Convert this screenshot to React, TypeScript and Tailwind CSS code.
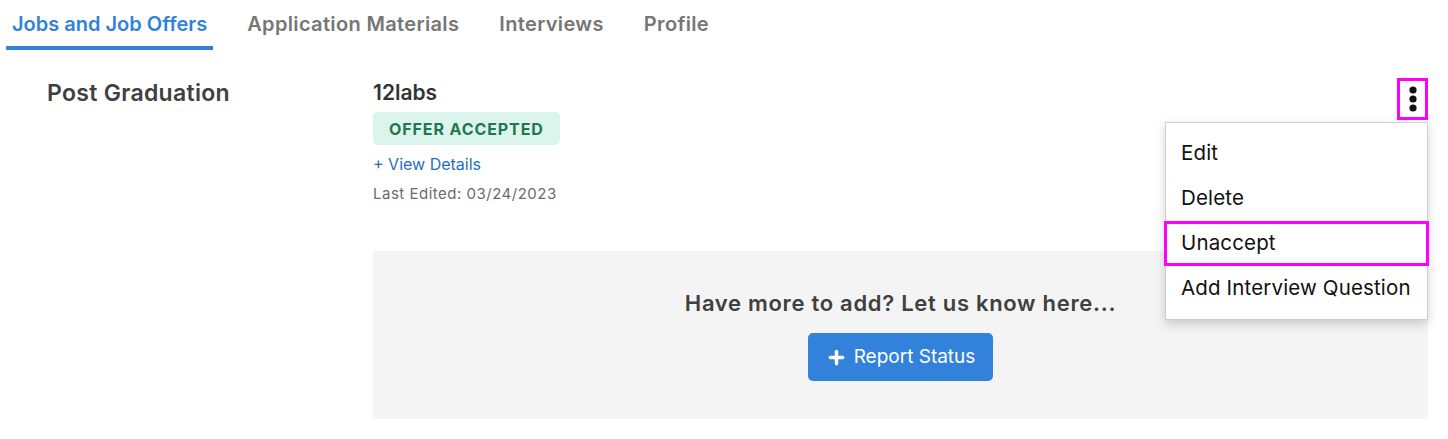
import { Plus } from "lucide-react";

const tabs = ["Jobs and Job Offers", "Application Materials", "Interviews", "Profile"];
const menuItems = ["Edit", "Delete", "Unaccept", "Add Interview Question"];

function KebabIcon() {
  return (
    <svg width="8" height="26" viewBox="0 0 8 26" fill="#111">
      <circle cx="4" cy="4" r="3.6" />
      <circle cx="4" cy="13" r="3.6" />
      <circle cx="4" cy="22" r="3.6" />
    </svg>
  );
}

function ActionMenu() {
  return (
    <div className="absolute right-0 top-[44px] w-[263px] bg-white border border-[#cfcfcf] shadow-[0_4px_10px_rgba(0,0,0,0.18)] py-[8px] z-10">
      {menuItems.map((item) => (
        <div
          key={item}
          className={
            item === "Unaccept"
              ? "h-[45px] flex items-center whitespace-nowrap text-[20.5px] tracking-[0.15px] text-[#111] border-[3px] border-[#ff00ff] -mx-[2px] px-[14px]"
              : "h-[45px] flex items-center whitespace-nowrap px-[15px] text-[20.5px] tracking-[0.15px] text-[#111]"
          }
        >
          {item}
        </div>
      ))}
    </div>
  );
}

export default function App() {
  return (
    <div className="w-[1448px] h-[439px] bg-white overflow-hidden font-['Inter','Liberation_Sans',sans-serif]">
      <nav className="flex gap-[28px] pl-[6px] h-[50px]">
        {tabs.map((tab, i) => (
          <div
            key={tab}
            className={
              i === 0
                ? "px-[6px] pt-[9px] text-[20px] font-semibold text-[#3182d8] border-b-[4px] border-[#3182d8]"
                : "px-[6px] pt-[9px] text-[20px] font-semibold text-[#767676] tracking-[0.35px]"
            }
          >
            {tab}
          </div>
        ))}
      </nav>

      <div className="flex pt-[28px]">
        <div className="w-[373px] pl-[47px]">
          <h2 className="text-[23px] font-semibold text-[#404040] leading-[30px] tracking-[0.3px]">Post Graduation</h2>
        </div>

        <div className="flex-1 mr-[20px]">
          <div className="flex justify-between">
            <div className="flex flex-col items-start">
              <div className="text-[21px] font-semibold text-[#333] leading-[30px]">12labs</div>
              <div className="mt-[4px] px-[16px] h-[33px] flex items-center rounded-[5px] bg-[#dbf5ec] text-[#23774f] text-[16px] font-bold tracking-[0.9px]">
                OFFER ACCEPTED
              </div>
              <a className="mt-[8px] text-[16px] text-[#1e6ebe] leading-[22px]">+ View Details</a>
              <div className="mt-[8px] text-[15px] text-[#6b6b6b] leading-[22px] tracking-[0.5px]">Last Edited: 03/24/2023</div>
            </div>

            <div className="relative">
              <button className="w-[31px] h-[42px] flex items-center justify-center border-[3px] border-[#ff00ff] bg-white">
                <KebabIcon />
              </button>
              <ActionMenu />
            </div>
          </div>

          <div className="mt-[46px] h-[168px] bg-[#f4f4f4] flex flex-col items-center pt-[38px]">
            <p className="text-[22px] font-semibold text-[#404040] leading-[28px] tracking-[0.7px]">Have more to add? Let us know here...</p>
            <button className="mt-[16px] h-[48px] px-[18px] flex items-center gap-[7px] rounded-[5px] bg-[#3281db] text-white text-[19px]">
              <Plus size={21} strokeWidth={4} />
              Report Status
            </button>
          </div>
        </div>
      </div>
    </div>
  );
}
